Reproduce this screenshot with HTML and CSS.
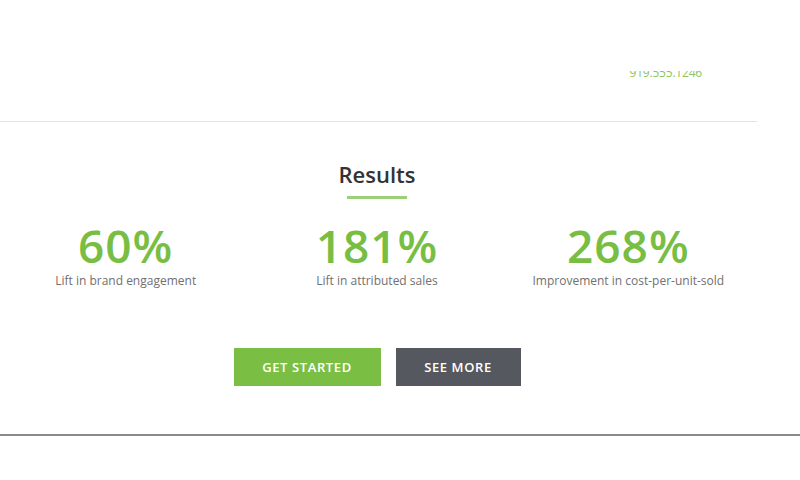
FILE: index.html
```html
<!DOCTYPE html>
<html>
<head>
<meta charset="utf-8">
<link rel="stylesheet" href="styles.css">
</head>
<body>
<div class="page">
  <header class="top">
    <div class="phone-clip"><span class="phone">919.555.1246</span></div>
  </header>
  <section class="results">
    <h2 class="title">Results</h2>
    <div class="underline"></div>
    <div class="stats">
      <div class="stat"><div class="num">60%</div><div class="label">Lift in brand engagement</div></div>
      <div class="stat"><div class="num">181%</div><div class="label">Lift in attributed sales</div></div>
      <div class="stat"><div class="num">268%</div><div class="label">Improvement in cost-per-unit-sold</div></div>
    </div>
    <div class="buttons">
      <a class="btn btn-green">GET STARTED</a>
      <a class="btn btn-gray">SEE MORE</a>
    </div>
  </section>
</div>
<div class="bottom-rule"></div>
</body>
</html>
```
FILE: styles.css
```css
html, body {
  margin: 0;
  padding: 0;
  background: #fff;
  font-family: "Open Sans", "DejaVu Sans", sans-serif;
}
.page {
  width: 757px;
}
.top {
  height: 122px;
  border-bottom: 1px solid #e3e3e3;
  display: flex;
  justify-content: flex-end;
  align-items: flex-start;
  box-sizing: border-box;
  padding-right: 55px;
}
.phone-clip {
  margin-top: 71px;
  height: 8px;
  overflow: hidden;
  display: flex;
  align-items: flex-end;
}
.phone {
  display: block;
  font-size: 12px;
  line-height: 12px;
  color: #8bc45f;
  letter-spacing: -0.2px;
  margin-top: -5px;
}
.results {
  display: flex;
  flex-direction: column;
  align-items: center;
  padding-top: 37px;
  padding-right: 3px;
}
.title {
  margin: 0;
  font-size: 22px;
  font-weight: 600;
  color: #333;
  line-height: 30px;
}
.underline {
  width: 60px;
  height: 3px;
  background: #9ccf78;
  margin-top: 7px;
}
.stats {
  display: grid;
  grid-template-columns: repeat(3, 1fr);
  width: 100%;
  margin-top: 22px;
}
.stat {
  display: flex;
  flex-direction: column;
  align-items: center;
}
.num {
  font-size: 46px;
  font-weight: 600;
  color: #78be43;
  line-height: 48px;
  letter-spacing: 1px;
}
.label {
  font-size: 12px;
  line-height: 16px;
  color: #707070;
  margin-top: 4px;
}
.buttons {
  display: flex;
  gap: 15px;
  margin-top: 59px;
}
.btn {
  display: flex;
  align-items: center;
  justify-content: center;
  height: 38px;
  color: #fff;
  font-size: 13px;
  font-weight: 600;
  letter-spacing: 0.6px;
}
.btn-green {
  width: 147px;
  background: #7abf43;
}
.btn-gray {
  width: 125px;
  background: #55585e;
}
.bottom-rule {
  margin-top: 48px;
  height: 2px;
  background: #8a8a8a;
  width: 100%;
}
```
